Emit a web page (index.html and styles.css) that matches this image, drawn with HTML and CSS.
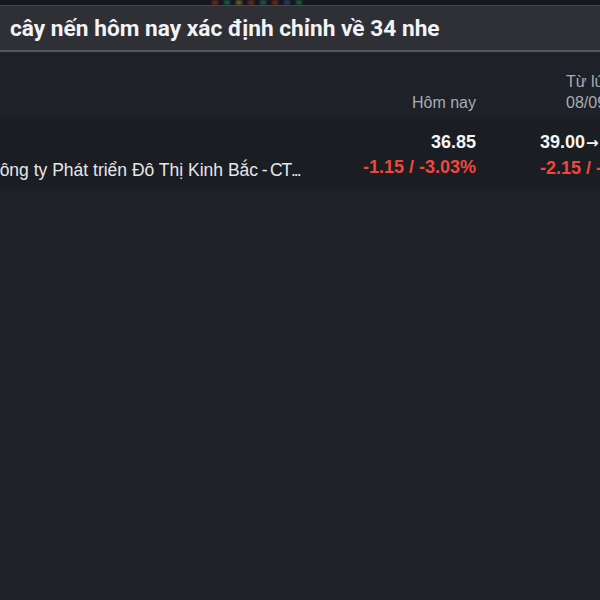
FILE: index.html
```html
<!DOCTYPE html>
<html lang="vi">
<head>
<meta charset="utf-8">
<link rel="stylesheet" href="styles.css">
</head>
<body>
<div class="page">
  <div class="topstrip">
    <div class="candles">
      <span class="c red"></span><span class="c green"></span><span class="c yellow"></span><span class="c red"></span><span class="c teal"></span><span class="c red"></span><span class="c blue"></span><span class="c green"></span>
    </div>
  </div>
  <div class="titlebar">
    <h1 class="title">cây nến hôm nay xác định chỉnh về 34 nhe</h1>
  </div>
  <div class="table">
    <div class="row head">
      <div class="cell name"></div>
      <div class="cell today"><span class="hd">Hôm nay</span></div>
      <div class="cell since"><span class="hd hd2">Từ lúc mua<br>08/09/2023</span></div>
    </div>
    <div class="row data">
      <div class="cell name">
        <div class="line">&nbsp;</div>
        <div class="line company">Công ty Phát triển Đô Thị Kinh Bắc<span class="tail"> - CT</span><span class="ell">...</span></div>
      </div>
      <div class="cell today">
        <div class="line price">36.85</div>
        <div class="line change">-1.15 / -3.03%</div>
      </div>
      <div class="cell since">
        <div class="line price">39.00<span class="arrow">→</span>36.85</div>
        <div class="line change">-2.15 / -5.51%</div>
      </div>
    </div>
  </div>
</div>
</body>
</html>
```

FILE: styles.css
```css
html, body {
  margin: 0;
  padding: 0;
  background: #1e2128;
}
.page {
  width: 600px;
  height: 600px;
  overflow: hidden;
  background: #1e2128;
  font-family: "Liberation Sans", Arial, sans-serif;
}
.topstrip {
  height: 5px;
  background: #15171c;
  border-bottom: 1px solid #44474e;
  position: relative;
  overflow: hidden;
}
.candles {
  display: flex;
  gap: 6px;
  margin-left: 212px;
  height: 5px;
  opacity: 0.45;
  filter: blur(1px);
}
.c { width: 6px; height: 5px; }
.c.red { background: #c0392b; }
.c.green { background: #1f9c6c; }
.c.yellow { background: #b8a23a; }
.c.teal { background: #2a8f8a; }
.c.blue { background: #3b5fb0; }
.titlebar {
  height: 44px;
  background: #2e3036;
  border-bottom: 2px solid #54575d;
  display: flex;
  align-items: center;
  padding-left: 10px;
}
.title {
  margin: 0;
  font-family: Roboto, "Liberation Sans", sans-serif;
  font-weight: 700;
  font-size: 22.7px;
  color: #f2f3f5;
  letter-spacing: 0;
}
.table {
  margin-left: -13px;
  width: 760px;
}
.row {
  display: flex;
}
.row.head {
  height: 65px;
  align-items: flex-end;
  box-sizing: border-box;
  padding-bottom: 4px;
}
.row.data {
  background: #1a1d22;
  height: 71px;
  box-sizing: border-box;
  padding-top: 13px;
}
.cell { flex: none; }
.cell.name { width: 325px; }
.cell.today { width: 164px; text-align: right; }
.cell.since { width: 220px; text-align: left; padding-left: 64px; }
.hd {
  display: inline-block;
  font-size: 16px;
  line-height: 21px;
  color: #a9acb2;
  text-align: left;
}
.hd2 { margin-left: 26px; }
.line {
  font-size: 18px;
  line-height: 25px;
  white-space: nowrap;
}
.price {
  font-weight: 700;
  color: #f4f5f7;
}
.arrow {
  font-family: "DejaVu Sans", sans-serif;
  font-weight: 700;
  font-size: 15px;
  margin: 0 4px 0 1px;
}
.change {
  font-weight: 700;
  color: #f0473d;
}
.company {
  font-size: 17.5px;
  color: #e6e7ea;
  padding-top: 3px;
}
.tail {
  letter-spacing: -1.2px;
}
.ell {
  letter-spacing: -2px;
}
```
